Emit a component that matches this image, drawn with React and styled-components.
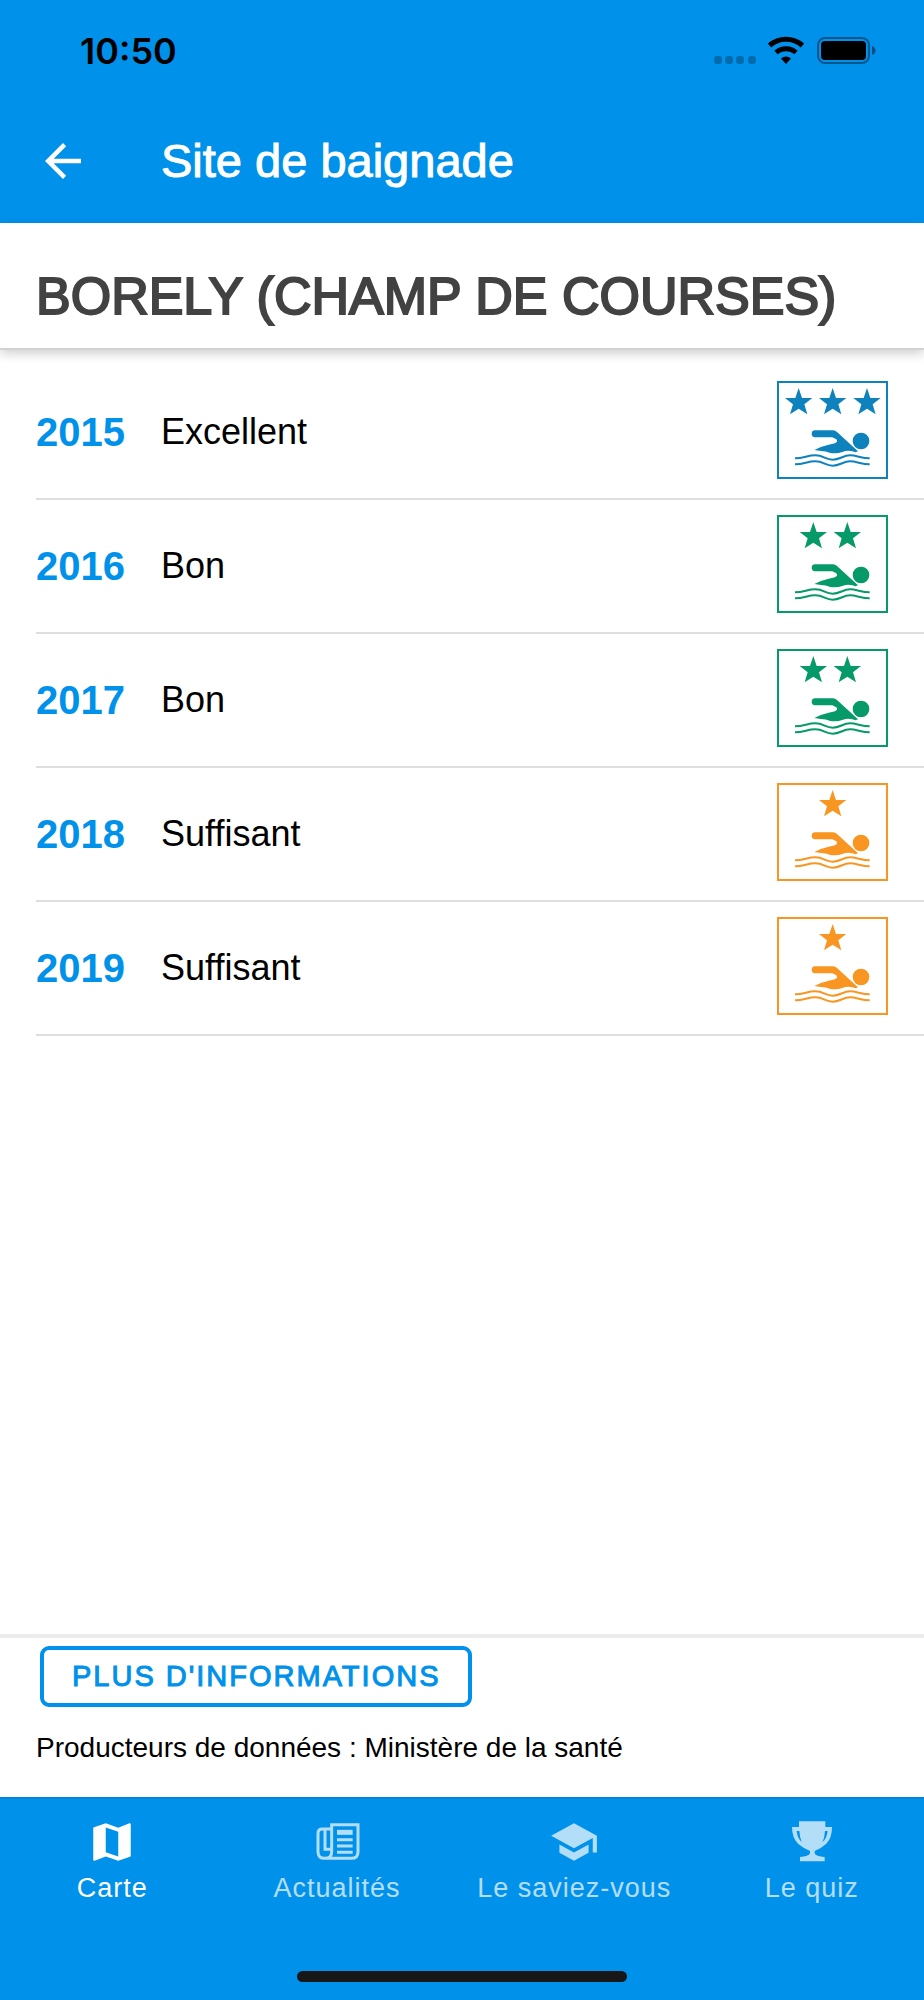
import styled, { createGlobalStyle } from "styled-components";
import { MdArrowBack, MdMap, MdSchool } from "react-icons/md";

const BLUE = "#0091ea";

const GlobalStyle = createGlobalStyle`
  body {
    margin: 0;
    background-color: white;
    font-family: "Liberation Sans", Arial, sans-serif;
    color: black;
  }
`;

const Screen = styled.div`
  min-height: 100vh;
  display: flex;
  flex-direction: column;
`;

const StatusBar = styled.div`
  height: 98px;
  box-sizing: border-box;
  padding: 4px 48px 0 80px;
  background-color: ${BLUE};
  display: flex;
  justify-content: space-between;
  align-items: center;
`;
const Time = styled.span`
  font-family: Inter, sans-serif;
  font-size: 36px;
  font-weight: 600;
`;
const StatusIcons = styled.svg`
  width: 164px;
  height: 30px;
`;

const Toolbar = styled.header`
  height: 125px;
  padding: 0 36px;
  background-color: ${BLUE};
  color: white;
  display: flex;
  align-items: center;
  gap: 71px;
`;
const BackButton = styled.button`
  padding: 0;
  border: none;
  background: none;
  color: inherit;
  font-size: 54px;
  display: flex;
`;
const ToolbarTitle = styled.span`
  font-size: 47px;
  -webkit-text-stroke: 1px currentColor;
`;

const SiteHeader = styled.div`
  padding: 43px 36px 22px;
  border-bottom: 2px solid #d2d2d2;
  box-shadow: 0 4px 10px rgba(0, 0, 0, 0.18);
`;
const SiteName = styled.h1`
  margin: 0;
  font-size: 52px;
  line-height: 60px;
  font-weight: normal;
  color: #424242;
  -webkit-text-stroke: 2px currentColor;
`;

const Content = styled.main`
  flex: 1;
  padding: 16px 0 16px 36px;
`;
const List = styled.ul`
  margin: 0;
  padding: 0;
  list-style: none;
`;
const Row = styled.li`
  height: 132px;
  padding-right: 36px;
  border-bottom: 2px solid #dedede;
  display: flex;
  align-items: center;
`;
const Year = styled.span`
  width: 125px;
  font-size: 40px;
  font-weight: bold;
  color: ${BLUE};
`;
const Quality = styled.span`
  flex: 1;
  font-size: 36px;
`;
const Badge = styled.svg`
  width: 111px;
  height: 98px;
  margin-bottom: 4px;
`;

const Footer = styled.footer`
  padding: 8px 36px 31px;
  border-top: 4px solid #ececec;
  display: flex;
  flex-direction: column;
  align-items: flex-start;
  gap: 23px;
`;
const MoreButton = styled.button`
  height: 61px;
  margin-left: 4px;
  padding: 0 28px;
  border: 4px solid ${BLUE};
  border-radius: 9px;
  background-color: white;
  color: ${BLUE};
  font-family: inherit;
  font-size: 29px;
  letter-spacing: 2px;
  text-transform: uppercase;
  -webkit-text-stroke: 1px currentColor;
`;
const Source = styled.p`
  margin: 0;
  font-size: 28px;
  line-height: 36px;
`;

const TabBar = styled.nav`
  background-color: ${BLUE};
  border-top: 2px solid #0083d8;
`;
const Tabs = styled.div`
  display: flex;
`;
const Tab = styled.a`
  flex: 1;
  padding: 18px 28px 0;
  color: white;
  opacity: ${({ $active }) => ($active ? 1 : 0.7)};
  text-decoration: none;
  font-size: 27px;
  line-height: 32px;
  letter-spacing: 1px;
  white-space: nowrap;
  display: flex;
  flex-direction: column;
  align-items: center;
  gap: 5px;

  svg {
    width: 50px;
    height: 50px;
  }
`;
const HomeIndicator = styled.div`
  width: 330px;
  height: 11px;
  margin: 67px auto 18px;
  border-radius: 6px;
  background-color: #171717;
`;

const STAR =
  "M0 -42 L10 -12 L41 -12 L17 7 L26 37 L0 20 L-26 37 L-17 7 L-41 -12 L-10 -12 Z";

const starPositions = {
  1: [167],
  2: [109, 211],
  3: [65, 167, 270],
};

const QualityBadge = ({ stars, color }) => (
  <Badge viewBox="0 0 333 294" fill={color} stroke="none" aria-hidden="true">
    <rect x="3" y="3" width="327" height="288" fill="none" stroke={color} strokeWidth="6" />
    {starPositions[stars].map((x) => (
      <path key={x} d={STAR} transform={`translate(${x} 63)`} />
    ))}
    <path d="M114 148 H168 Q175 148 180 153 L243 211 Q236 216 226 211 Q212 206 196 213 Q180 219 160 216 Q146 210 132 210 L112 207 Q135 195 155 191 L174 187 Q184 182 178 175 L166 169 H114 Q104 167 104 158 Q105 148 114 148 Z" />
    <circle cx="252" cy="180" r="25" />
    <g fill="none" stroke={color} strokeWidth="6">
      <path d="M54 232 C82 232 90 223 115 223 S145 236 167 236 S198 223 219 223 S252 232 278 232" />
      <path d="M54 250 C82 250 90 241 115 241 S145 254 167 254 S198 241 219 241 S252 250 278 250" />
    </g>
  </Badge>
);

const NewsIcon = () => (
  <svg viewBox="15 15 150 150" fill="none" stroke="currentColor" strokeWidth="9">
    <path d="M74 51 H46 Q33 51 33 64 V119 Q33 139 53 139 H133 Q153 139 153 119 V38 H74 V119 Q74 139 54 139" />
    <path d="M54 51 V112 H74" />
    <path d="M90 61 H137" strokeWidth="15" />
    <path d="M90 83 H137 M90 102 H137 M90 121 H137" />
  </svg>
);

const TrophyIcon = () => (
  <svg viewBox="15 15 150 150" fill="currentColor" fillRule="evenodd">
    <path d="M51 28 H130 V45 H150 Q150 78 133 95 Q120 107 98 117 V124 Q102 134 128 135 V148 H54 V135 Q80 134 84 124 V117 Q62 107 48 95 Q30 78 30 45 H51 Z M44 57 Q46 78 59 90 Q53 74 52 57 Z M137 57 Q135 78 122 90 Q128 74 129 57 Z" />
  </svg>
);

const results = [
  { year: 2015, label: "Excellent", stars: 3, color: "#0e82bd" },
  { year: 2016, label: "Bon", stars: 2, color: "#069a68" },
  { year: 2017, label: "Bon", stars: 2, color: "#069a68" },
  { year: 2018, label: "Suffisant", stars: 1, color: "#f99621" },
  { year: 2019, label: "Suffisant", stars: 1, color: "#f99621" },
];

const tabs = [
  { label: "Carte", Icon: MdMap, active: true },
  { label: "Actualités", Icon: NewsIcon },
  { label: "Le saviez-vous", Icon: MdSchool },
  { label: "Le quiz", Icon: TrophyIcon },
];

const App = () => {
  return (
    <Screen>
      <GlobalStyle />
      <StatusBar>
        <Time>10:50</Time>
        <StatusIcons viewBox="0 0 164 30" aria-hidden="true">
          <g opacity="0.25">
            <rect x="2" y="20" width="8" height="8" rx="3" />
            <rect x="13" y="20" width="8" height="8" rx="3" />
            <rect x="24" y="20" width="8" height="8" rx="3" />
            <rect x="36" y="20" width="8" height="8" rx="3" />
          </g>
          <g fill="none" stroke="black" strokeWidth="5">
            <path d="M57.500 9.500 A25 25 0 0 1 90.500 9.500" />
            <path d="M64 16.500 A15 15 0 0 1 84 16.500" />
          </g>
          <path d="M74 28 L69 22.500 Q74 18.500 79 22.500 Z" />
          <rect x="106" y="2" width="51" height="25" rx="7" fill="none" stroke="black" strokeWidth="2" opacity="0.4" />
          <rect x="109" y="5" width="45" height="19" rx="4" />
          <path d="M160 10 Q163.500 11 163.500 14.500 Q163.500 18 160 19 Z" opacity="0.45" />
        </StatusIcons>
      </StatusBar>
      <Toolbar>
        <BackButton aria-label="Retour">
          <MdArrowBack />
        </BackButton>
        <ToolbarTitle>Site de baignade</ToolbarTitle>
      </Toolbar>
      <SiteHeader>
        <SiteName>BORELY (CHAMP DE COURSES)</SiteName>
      </SiteHeader>
      <Content>
        <List>
          {results.map(({ year, label, stars, color }) => (
            <Row key={year}>
              <Year>{year}</Year>
              <Quality>{label}</Quality>
              <QualityBadge stars={stars} color={color} />
            </Row>
          ))}
        </List>
      </Content>
      <Footer>
        <MoreButton>Plus d'informations</MoreButton>
        <Source>Producteurs de données : Ministère de la santé</Source>
      </Footer>
      <TabBar>
        <Tabs>
          {tabs.map(({ label, Icon, active }) => (
            <Tab key={label} href="#" $active={active}>
              <Icon />
              {label}
            </Tab>
          ))}
        </Tabs>
        <HomeIndicator />
      </TabBar>
    </Screen>
  );
};

export default App;
